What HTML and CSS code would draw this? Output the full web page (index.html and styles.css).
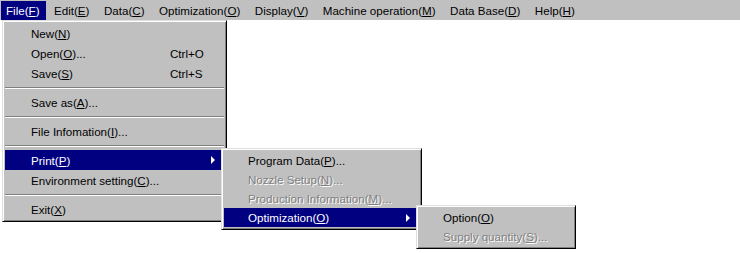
FILE: index.html
```html
<!DOCTYPE html>
<html lang="en">
  <head>
    <meta charset="UTF-8" />
    <title>Menu</title>
    <link rel="stylesheet" href="styles.css">
  </head>
  <body>
    <div class="screen">
      <div class="menubar">
        <div class="bar-item open">File(<u>F</u>)
          <div class="menu main-menu">
            <div class="item"><span class="label">New(<u>N</u>)</span></div>
            <div class="item"><span class="label">Open(<u>O</u>)...</span><span class="key">Ctrl+O</span></div>
            <div class="item"><span class="label">Save(<u>S</u>)</span><span class="key">Ctrl+S</span></div>
            <div class="sep"></div>
            <div class="item"><span class="label">Save as(<u>A</u>)...</span></div>
            <div class="sep"></div>
            <div class="item"><span class="label">File Infomation(<u>I</u>)...</span></div>
            <div class="sep"></div>
            <div class="item active"><span class="label">Print(<u>P</u>)</span><span class="arrow"></span>
              <div class="menu print-menu">
                <div class="item"><span class="label">Program Data(<u>P</u>)...</span></div>
                <div class="item disabled"><span class="label">Nozzle Setup(<u>N</u>)...</span></div>
                <div class="item disabled"><span class="label">Production Information(<u>M</u>)...</span></div>
                <div class="item active"><span class="label">Optimization(<u>O</u>)</span><span class="arrow"></span>
                  <div class="menu opt-menu">
                    <div class="item"><span class="label">Option(<u>O</u>)</span></div>
                    <div class="item disabled"><span class="label">Supply quantity(<u>S</u>)...</span></div>
                  </div>
                </div>
              </div>
            </div>
            <div class="item"><span class="label">Environment setting(<u>C</u>)...</span></div>
            <div class="sep"></div>
            <div class="item"><span class="label">Exit(<u>X</u>)</span></div>
          </div>
        </div>
        <div class="bar-item">Edit(<u>E</u>)</div>
        <div class="bar-item">Data(<u>C</u>)</div>
        <div class="bar-item">Optimization(<u>O</u>)</div>
        <div class="bar-item">Display(<u>V</u>)</div>
        <div class="bar-item">Machine operation(<u>M</u>)</div>
        <div class="bar-item">Data Base(<u>D</u>)</div>
        <div class="bar-item">Help(<u>H</u>)</div>
      </div>
    </div>
  </body>
</html>
```

FILE: styles.css
```css
html,
body {
  margin: 0;
  background: #fff;
}
body {
  font-family: "Liberation Sans", Arial, sans-serif;
  font-size: 11.6px;
  color: #000;
}
.screen {
  position: relative;
  width: 740px;
  height: 253px;
}
.menubar {
  display: flex;
  gap: 2.5px;
  height: 20px;
  padding-top: 1px;
  box-sizing: border-box;
  background-color: #c0c0c0;
}
.bar-item {
  position: relative;
  height: 19px;
  line-height: 19px;
  padding: 0 6px;
  white-space: nowrap;
}
.bar-item:first-child {
  margin-left: 1px;
  padding-left: 5px;
}
.bar-item.open {
  background-color: #000080;
  color: #fff;
}
.menu {
  position: absolute;
  background-color: #c0c0c0;
  color: #000;
  border: 1px solid;
  border-color: #dfdfdf #000 #000 #dfdfdf;
  box-shadow: inset 1px 1px #fff, inset -1px -1px #808080;
  padding: 2px;
  z-index: 1;
}
.main-menu {
  left: 1px;
  top: 19px;
  width: 219px;
}
.print-menu {
  left: calc(100% - 3px);
  top: -2px;
  width: 195px;
}
.opt-menu {
  left: calc(100% - 3px);
  top: -3px;
  width: 154px;
}
.item {
  position: relative;
  display: flex;
  align-items: center;
  height: 20px;
  padding-left: 26px;
  padding-right: 9px;
  white-space: nowrap;
}
.print-menu .item,
.opt-menu .item {
  height: 19px;
  padding-left: 24px;
}
.main-menu .label {
  flex: 0 0 139px;
}
.item.active {
  background-color: #000080;
  color: #fff;
}
.item.active > .menu {
  color: #000;
}
.disabled {
  color: #808080;
  text-shadow: 1px 1px 0 #fff;
}
.arrow {
  margin-left: auto;
  width: 0;
  height: 0;
  border-top: 4px solid transparent;
  border-bottom: 4px solid transparent;
  border-left: 4px solid #fff;
}
.sep {
  margin: 4px 0 3px;
  border-top: 1px solid #808080;
  border-bottom: 1px solid #fff;
}
```
